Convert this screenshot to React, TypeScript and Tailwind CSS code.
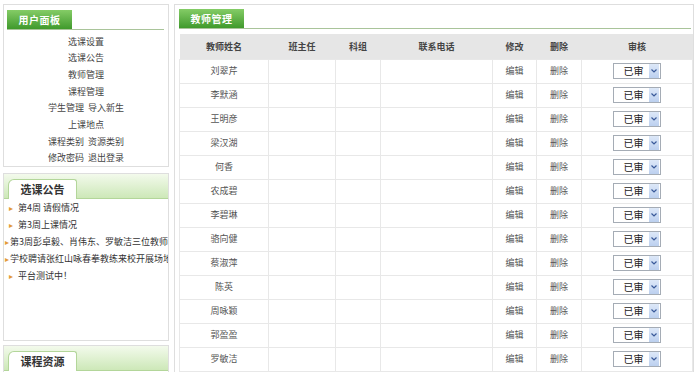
import React from "react";

const font = { fontFamily: '"Noto Sans CJK SC", "Noto Sans", sans-serif' };

const menu = [
  ["选课设置"],
  ["选课公告"],
  ["教师管理"],
  ["课程管理"],
  ["学生管理", "导入新生"],
  ["上课地点"],
  ["课程类别", "资源类别"],
  ["修改密码", "退出登录"],
];

const notices: { text: string; tight?: boolean }[] = [
  { text: "第4周 请假情况" },
  { text: "第3周上课情况" },
  { text: "第3周彭卓毅、肖伟东、罗敏洁三位教师参加培训", tight: true },
  { text: "学校聘请张红山咏春拳教练来校开展场地教学", tight: true },
  { text: "平台测试中！" },
];

const teachers = [
  "刘翠芹",
  "李默涵",
  "王明彦",
  "梁汉湖",
  "何香",
  "农成碧",
  "李碧琳",
  "骆向健",
  "蔡淑萍",
  "陈英",
  "周咏颖",
  "郭盈盈",
  "罗敏洁",
];

function GreenTab({ label }: { label: string }) {
  return (
    <div className="w-[65px] h-[19px] bg-gradient-to-b from-[#84cc66] to-[#3f9a2b] text-white font-bold text-[10px] flex items-center justify-center tracking-[0.5px]">
      {label}
    </div>
  );
}

function BandHeader({ label }: { label: string }) {
  return (
    <div className="h-[25px] shrink-0 bg-gradient-to-b from-[#f3faec] to-[#cde8b8] border-b border-[#b3d69a] flex items-end pl-[4px]">
      <div className="w-[69px] h-[20px] -mb-px bg-white border border-[#b3d69a] border-b-0 rounded-tl-[6px] rounded-tr-[3px] flex items-center justify-center text-[11px] font-bold text-[#333]">
        {label}
      </div>
    </div>
  );
}

function Select() {
  return (
    <div className="mx-auto w-[48px] h-[16px] border border-[#a5acb5] bg-white flex items-center">
      <span className="flex-1 pl-[4px] text-[10px] text-[#222] leading-none">已审</span>
      <span className="w-[10px] h-[14px] mr-px bg-gradient-to-b from-[#dde8f8] to-[#bcd0ef] flex items-center justify-center">
        <svg width="6" height="4" viewBox="0 0 6 4">
          <path d="M0.5 0.5 L3 3 L5.5 0.5" stroke="#3a5a9a" strokeWidth="1.2" fill="none" />
        </svg>
      </span>
    </div>
  );
}

export default function App() {
  return (
    <div style={font} className="w-[700px] h-[372px] overflow-hidden bg-white flex items-start pt-[4px] pl-[3px] gap-[5px] text-[#555]">
      {/* left column */}
      <div className="w-[166px] shrink-0 flex flex-col">
        <div className="h-[163px] shrink-0 border border-[#dedede] flex flex-col">
          <div className="mt-[5px] ml-[3px] mr-[4px] border-b border-[#a9c49a] flex">
            <GreenTab label="用户面板" />
          </div>
          <div className="pt-[3px] flex flex-col items-center text-[9px] text-[#444]">
            {menu.map((m, i) => (
              <div key={i} className="h-[16.7px] flex items-center gap-[4px]">
                {m.map((t) => (
                  <span key={t}>{t}</span>
                ))}
              </div>
            ))}
          </div>
        </div>

        <div className="mt-[6px] h-[168px] shrink-0 border border-[#dedede] flex flex-col">
          <BandHeader label="选课公告" />
          <div className="flex flex-col text-[9px] text-[#333]">
            {notices.map((n, i) => (
              <div
                key={i}
                className={
                  "h-[17px] flex items-center whitespace-nowrap overflow-hidden " +
                  (n.tight ? "pl-[1px]" : "pl-[5px]")
                }
              >
                <span className={"text-[#e39a3a] text-[8px] " + (n.tight ? "mr-[1px]" : "mr-[5px]")}>▸</span>
                <span>{n.text}</span>
              </div>
            ))}
          </div>
        </div>

        <div className="mt-[4px] h-[60px] shrink-0 border border-[#dedede]">
          <BandHeader label="课程资源" />
        </div>
      </div>

      {/* right panel */}
      <div className="w-[520px] h-[400px] shrink-0 border border-[#dedede] flex flex-col">
        <div className="mt-[4px] ml-[4px] mr-[2px] border-b border-[#a9c49a] flex">
          <GreenTab label="教师管理" />
        </div>
        <div className="mt-[5px] ml-[4px] mr-[1px]">
          <table className="w-[514px] border-collapse table-fixed text-[9px] text-center">
            <colgroup>
              <col className="w-[89px]" />
              <col className="w-[67px]" />
              <col className="w-[45px]" />
              <col className="w-[112px]" />
              <col className="w-[44px]" />
              <col className="w-[45px]" />
              <col />
            </colgroup>
            <thead>
              <tr className="h-[25px] bg-[#e6e6e6] text-[#444]">
                {["教师姓名", "班主任", "科组", "联系电话", "修改", "删除", "审核"].map((h) => (
                  <th key={h} className="font-bold">
                    {h}
                  </th>
                ))}
              </tr>
            </thead>
            <tbody>
              {teachers.map((t) => (
                <tr key={t} className="h-[24px]">
                  <td className="border border-[#e8e8e8]">{t}</td>
                  <td className="border border-[#e8e8e8]"></td>
                  <td className="border border-[#e8e8e8]"></td>
                  <td className="border border-[#e8e8e8]"></td>
                  <td className="border border-[#e8e8e8]">编辑</td>
                  <td className="border border-[#e8e8e8]">删除</td>
                  <td className="border border-[#e8e8e8]">
                    <Select />
                  </td>
                </tr>
              ))}
            </tbody>
          </table>
        </div>
      </div>
    </div>
  );
}
